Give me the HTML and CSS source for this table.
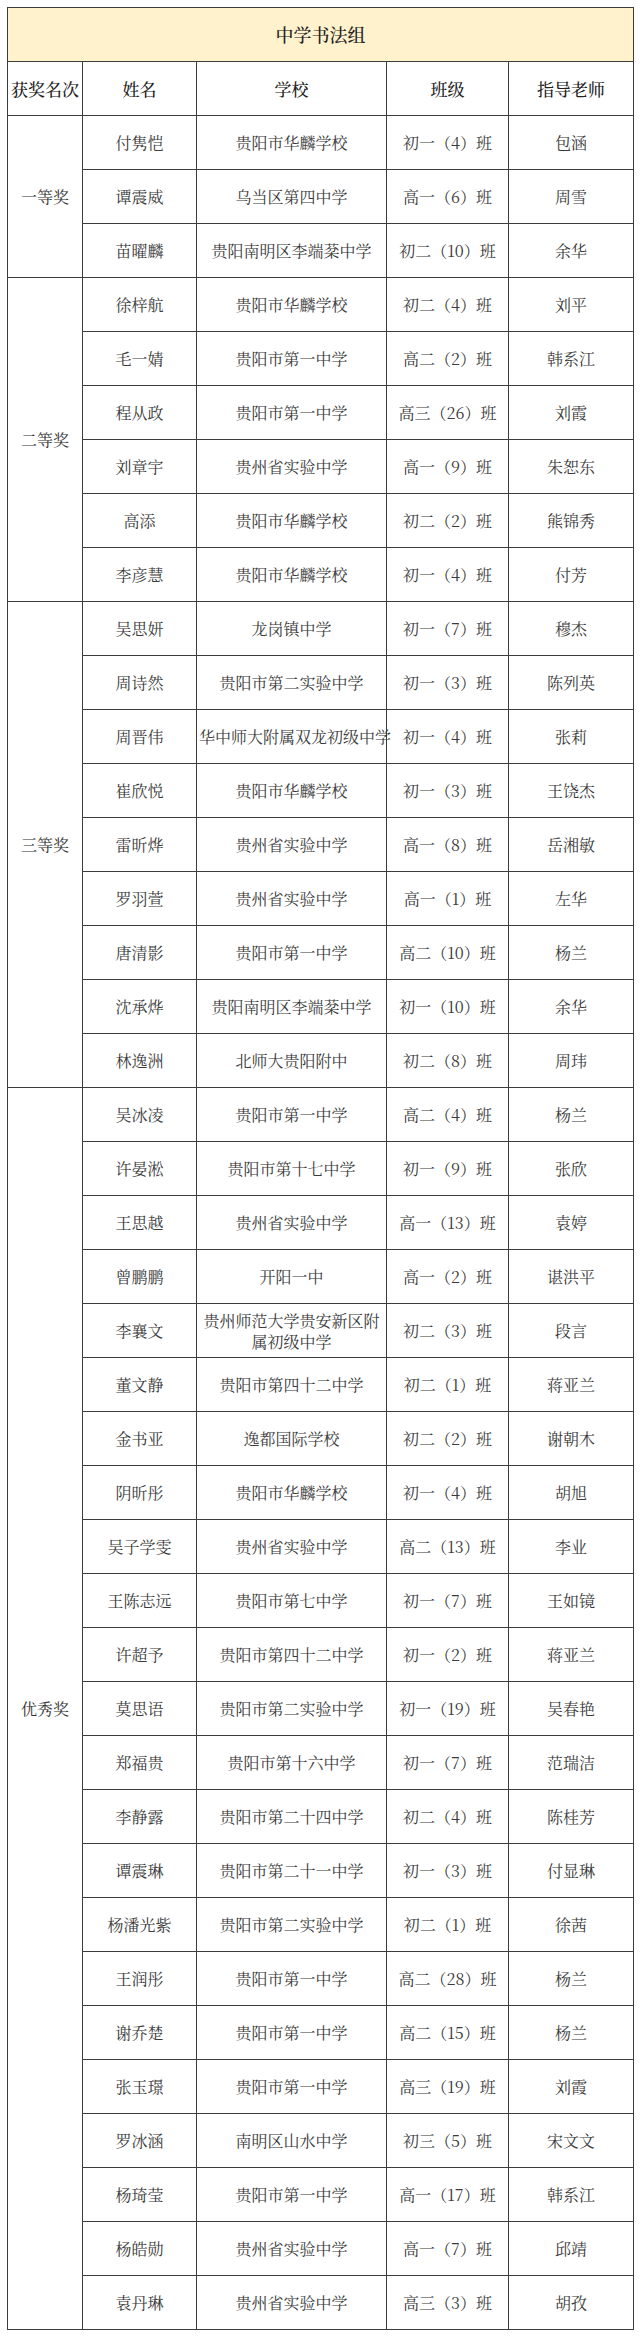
FILE: index.html
```html
<!DOCTYPE html>
<html lang="zh-CN">
<head>
<meta charset="utf-8">
<title>中学书法组</title>
<link rel="stylesheet" href="styles.css">
</head>
<body>
<table class="award-table">
  <colgroup>
    <col class="c-rank">
    <col class="c-name">
    <col class="c-school">
    <col class="c-class">
    <col class="c-teacher">
  </colgroup>
  <tbody>
    <tr class="title-row"><td colspan="5" class="title">中学书法组</td></tr>
    <tr class="head-row"><th>获奖名次</th><th>姓名</th><th>学校</th><th>班级</th><th>指导老师</th></tr>

    <tr><td rowspan="3" class="rank">一等奖</td><td>付隽恺</td><td>贵阳市华麟学校</td><td>初一（4）班</td><td>包涵</td></tr>
    <tr><td>谭震威</td><td>乌当区第四中学</td><td>高一（6）班</td><td>周雪</td></tr>
    <tr><td>苗曜麟</td><td>贵阳南明区李端棻中学</td><td>初二（10）班</td><td>余华</td></tr>

    <tr><td rowspan="6" class="rank">二等奖</td><td>徐梓航</td><td>贵阳市华麟学校</td><td>初二（4）班</td><td>刘平</td></tr>
    <tr><td>毛一婧</td><td>贵阳市第一中学</td><td>高二（2）班</td><td>韩系江</td></tr>
    <tr><td>程从政</td><td>贵阳市第一中学</td><td>高三（26）班</td><td>刘霞</td></tr>
    <tr><td>刘章宇</td><td>贵州省实验中学</td><td>高一（9）班</td><td>朱恕东</td></tr>
    <tr><td>高添</td><td>贵阳市华麟学校</td><td>初二（2）班</td><td>熊锦秀</td></tr>
    <tr><td>李彦慧</td><td>贵阳市华麟学校</td><td>初一（4）班</td><td>付芳</td></tr>

    <tr><td rowspan="9" class="rank">三等奖</td><td>吴思妍</td><td>龙岗镇中学</td><td>初一（7）班</td><td>穆杰</td></tr>
    <tr><td>周诗然</td><td>贵阳市第二实验中学</td><td>初一（3）班</td><td>陈列英</td></tr>
    <tr><td>周晋伟</td><td class="nowrap">华中师大附属双龙初级中学</td><td>初一（4）班</td><td>张莉</td></tr>
    <tr><td>崔欣悦</td><td>贵阳市华麟学校</td><td>初一（3）班</td><td>王饶杰</td></tr>
    <tr><td>雷昕烨</td><td>贵州省实验中学</td><td>高一（8）班</td><td>岳湘敏</td></tr>
    <tr><td>罗羽萱</td><td>贵州省实验中学</td><td>高一（1）班</td><td>左华</td></tr>
    <tr><td>唐清影</td><td>贵阳市第一中学</td><td>高二（10）班</td><td>杨兰</td></tr>
    <tr><td>沈承烨</td><td>贵阳南明区李端棻中学</td><td>初一（10）班</td><td>余华</td></tr>
    <tr><td>林逸洲</td><td>北师大贵阳附中</td><td>初二（8）班</td><td>周玮</td></tr>

    <tr><td rowspan="23" class="rank">优秀奖</td><td>吴冰凌</td><td>贵阳市第一中学</td><td>高二（4）班</td><td>杨兰</td></tr>
    <tr><td>许晏淞</td><td>贵阳市第十七中学</td><td>初一（9）班</td><td>张欣</td></tr>
    <tr><td>王思越</td><td>贵州省实验中学</td><td>高一（13）班</td><td>袁婷</td></tr>
    <tr><td>曾鹏鹏</td><td>开阳一中</td><td>高一（2）班</td><td>谌洪平</td></tr>
    <tr><td>李襄文</td><td class="two-line">贵州师范大学贵安新区附属初级中学</td><td>初二（3）班</td><td>段言</td></tr>
    <tr><td>董文静</td><td>贵阳市第四十二中学</td><td>初二（1）班</td><td>蒋亚兰</td></tr>
    <tr><td>金书亚</td><td>逸都国际学校</td><td>初二（2）班</td><td>谢朝木</td></tr>
    <tr><td>阴昕彤</td><td>贵阳市华麟学校</td><td>初一（4）班</td><td>胡旭</td></tr>
    <tr><td>吴子学雯</td><td>贵州省实验中学</td><td>高二（13）班</td><td>李业</td></tr>
    <tr><td>王陈志远</td><td>贵阳市第七中学</td><td>初一（7）班</td><td>王如镜</td></tr>
    <tr><td>许超予</td><td>贵阳市第四十二中学</td><td>初一（2）班</td><td>蒋亚兰</td></tr>
    <tr><td>莫思语</td><td>贵阳市第二实验中学</td><td>初一（19）班</td><td>吴春艳</td></tr>
    <tr><td>郑福贵</td><td>贵阳市第十六中学</td><td>初一（7）班</td><td>范瑞洁</td></tr>
    <tr><td>李静露</td><td>贵阳市第二十四中学</td><td>初二（4）班</td><td>陈桂芳</td></tr>
    <tr><td>谭震琳</td><td>贵阳市第二十一中学</td><td>初一（3）班</td><td>付显琳</td></tr>
    <tr><td>杨潘光紫</td><td>贵阳市第二实验中学</td><td>初二（1）班</td><td>徐茜</td></tr>
    <tr><td>王润彤</td><td>贵阳市第一中学</td><td>高二（28）班</td><td>杨兰</td></tr>
    <tr><td>谢乔楚</td><td>贵阳市第一中学</td><td>高二（15）班</td><td>杨兰</td></tr>
    <tr><td>张玉璟</td><td>贵阳市第一中学</td><td>高三（19）班</td><td>刘霞</td></tr>
    <tr><td>罗冰涵</td><td>南明区山水中学</td><td>初三（5）班</td><td>宋文文</td></tr>
    <tr><td>杨琦莹</td><td>贵阳市第一中学</td><td>高一（17）班</td><td>韩系江</td></tr>
    <tr><td>杨皓勋</td><td>贵州省实验中学</td><td>高一（7）班</td><td>邱靖</td></tr>
    <tr><td>袁丹琳</td><td>贵州省实验中学</td><td>高三（3）班</td><td>胡孜</td></tr>
  </tbody>
</table>
</body>
</html>
```

FILE: styles.css
```css
html, body {
  margin: 0;
  padding: 0;
  background: #ffffff;
}

body {
  padding: 7px 0 0 7px;
  font-family: "Noto Serif CJK SC", "Noto Sans CJK SC", "Liberation Serif", serif;
  color: #3a3a3a;
}

.award-table {
  border-collapse: collapse;
  table-layout: fixed;
  width: 626px;
}

.c-rank { width: 75px; }
.c-name { width: 114px; }
.c-school { width: 190px; }
.c-class { width: 122px; }
.c-teacher { width: 125px; }

.award-table tr {
  height: 54px;
}

.award-table td,
.award-table th {
  border: 1px solid #3c3c3c;
  padding: 0 2px;
  text-align: center;
  vertical-align: middle;
  font-size: 16px;
  line-height: 21px;
  font-weight: 400;
}

.award-table .title {
  background: #fff2cc;
  color: #222222;
  font-weight: 500;
  font-size: 18px;
}

.award-table th {
  color: #222222;
  font-weight: 500;
  font-size: 17px;
  padding: 0;
}

.award-table .rank {
  color: #333333;
}

.nowrap {
  white-space: nowrap;
  overflow: visible;
}

.two-line {
  padding: 0 6px;
}
```
